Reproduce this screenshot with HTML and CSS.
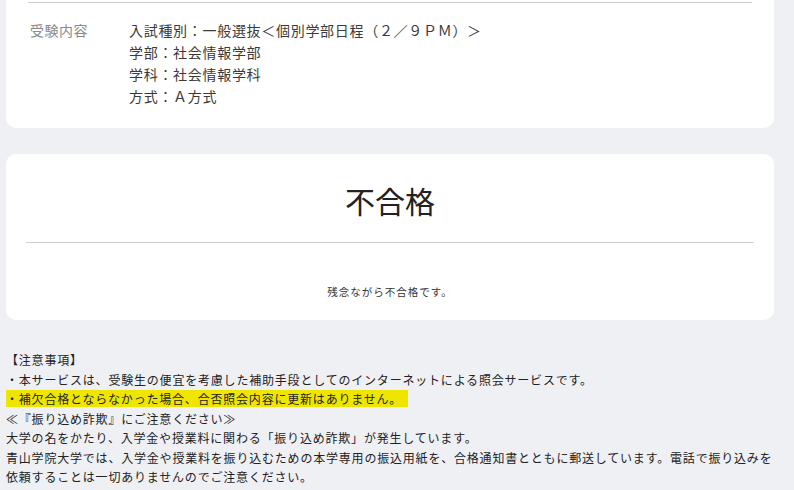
FILE: index.html
```html
<!DOCTYPE html>
<html lang="ja">
<head>
<meta charset="utf-8">
<title>合否照会</title>
<link rel="stylesheet" href="styles.css">
</head>
<body>
<main class="page">
  <section class="card card-info">
    <div class="rule"></div>
    <div class="row">
      <div class="label">受験内容</div>
      <div class="value">
        <p>入試種別：一般選抜＜個別学部日程（２／９ＰＭ）＞</p>
        <p>学部：社会情報学部</p>
        <p>学科：社会情報学科</p>
        <p>方式：Ａ方式</p>
      </div>
    </div>
  </section>

  <section class="card card-result">
    <h1 class="result-title">不合格</h1>
    <div class="rule"></div>
    <p class="result-message">残念ながら不合格です。</p>
  </section>

  <section class="notes">
    <p>【注意事項】</p>
    <p>・本サービスは、受験生の便宜を考慮した補助手段としてのインターネットによる照会サービスです。</p>
    <p><span class="highlight">・補欠合格とならなかった場合、合否照会内容に更新はありません。</span></p>
    <p>≪『振り込め詐欺』にご注意ください≫</p>
    <p>大学の名をかたり、入学金や授業料に関わる「振り込め詐欺」が発生しています。</p>
    <p>青山学院大学では、入学金や授業料を振り込むための本学専用の振込用紙を、合格通知書とともに郵送しています。電話で振り込みを依頼することは一切ありませんのでご注意ください。</p>
  </section>
</main>
</body>
</html>
```

FILE: styles.css
```css
* {
  box-sizing: border-box;
}

html, body {
  margin: 0;
  padding: 0;
}

body {
  background: #eff0f4;
  font-family: "Noto Sans CJK JP", "Noto Sans", sans-serif;
  color: #222;
}

.page {
  padding: 0 20px 0 6px;
  display: flex;
  flex-direction: column;
}

.card {
  background: #fff;
  border-radius: 10px;
}

.rule {
  height: 1px;
  background: #cfcfcf;
}

.card-info {
  border-radius: 0 0 10px 10px;
  padding: 2px 22px 21px;
}

.row {
  display: flex;
  padding: 16px 2px 0;
  font-size: 14px;
  letter-spacing: 0.7px;
  line-height: 22px;
}

.label {
  width: 99px;
  flex: none;
  color: #8a8a8a;
  letter-spacing: 0.5px;
}

.value {
  color: #3a3a3a;
}

.value p {
  margin: 0;
}

.card-result {
  margin-top: 26px;
  padding: 26px 20px 20px;
  text-align: center;
}

.result-title {
  margin: 0 0 22px;
  font-size: 30px;
  font-weight: 400;
  line-height: 40px;
  color: #222;
}

.result-message {
  margin: 41px 0 0;
  font-size: 10.5px;
  letter-spacing: 1px;
  line-height: 16px;
  color: #333;
}

.notes {
  margin-top: 30px;
  font-size: 12px;
  letter-spacing: 0.8px;
  line-height: 19.5px;
  color: #222;
}

.notes p {
  margin: 0;
}

.highlight {
  background: #efe600;
  padding-right: 6px;
}
```
